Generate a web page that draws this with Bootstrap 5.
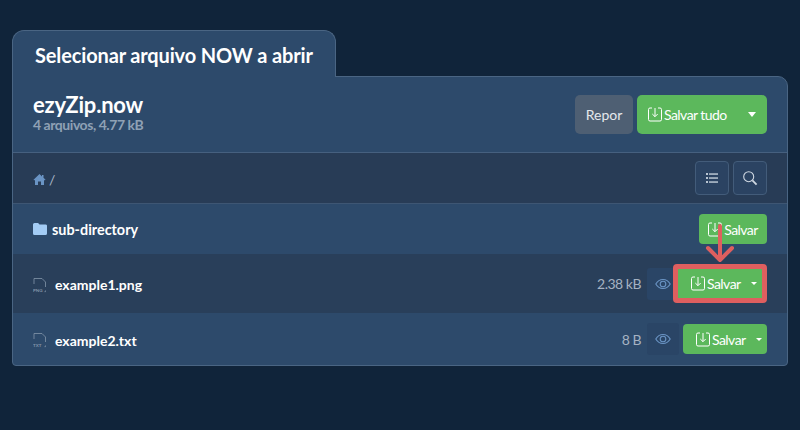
<!DOCTYPE html>
<html lang="pt">
<head>
<meta charset="utf-8">
<title>ezyZip</title>
<link href="https://cdn.jsdelivr.net/npm/bootstrap@5.3.0/dist/css/bootstrap.min.css" rel="stylesheet">
<style>
html,body{height:100%}
body{background:#10243a;font-family:Lato,sans-serif;color:#fff;padding:30px 12px 0;overflow:hidden}
.ez-tab{width:324px;height:47px;background:#2d4a6b;border:1px solid #4a6583;border-bottom:0;border-radius:12px 12px 0 0;font-size:20px;font-weight:700;padding-left:22px;position:relative;z-index:1;margin-bottom:-1px;line-height:49px;letter-spacing:-.14px}
.ez-panel{background:#2d4a6b;border:1px solid #4a6583;border-radius:0 10px 4px 4px;height:290px;overflow:visible;position:relative}
.ez-head{height:76px;padding:0 20px;border-bottom:1px solid #46607f}
.ez-brand{padding-bottom:3px}
.ez-title{font-size:22px;font-weight:700;line-height:22px;letter-spacing:-.2px}
.ez-sub{font-size:14px;font-weight:700;line-height:14px;color:#8fa1b5;letter-spacing:-.45px;margin-top:2px}
.ez-path{height:51px;padding:0 20px;background:#283c56;border-bottom:1px solid #3e5673;font-size:14px;color:#a9b6c6}
.ez-crumb{padding-top:3px;gap:3px}
.ez-row{padding:0 20px;font-weight:700}
.ez-r1{height:50px}.ez-r2{height:59px;background:#293f5a}.ez-r3{height:52px}
.ez-btn{background:#5cb85c;color:#fff;border:0;border-radius:4px;font-size:14px;font-weight:400;padding:0;display:inline-flex;align-items:center;justify-content:center;height:30px}
.ez-btn:hover{background:#5cb85c;color:#fff}
.ez-btn>span:not(.ez-caret){letter-spacing:-.55px}
.ez-btn svg{margin-right:2px;flex:none}
.ez-repor{width:58px;height:39px;background:#4e5f73;color:#e4e8ec;border:0;border-radius:5px;font-size:14px;padding:0}
.ez-all{width:130px;height:39px;margin-left:4px;justify-content:flex-start;padding-left:11px;border-radius:5px}
.ez-all .ez-caret{margin-left:auto;margin-right:11px;border-width:5px 4px 0}
.ez-dir{width:68px}
.ez-tool{width:34px;height:34px;background:#2b4362;border:1px solid #435c7a;border-radius:4px;padding:0;display:inline-flex;align-items:center;justify-content:center}
.ez-eye{width:32px;height:32px;background:#2a4566;border-radius:3px;display:inline-flex;align-items:center;justify-content:center}
.ez-size{color:#a5b2c2;font-size:14px;font-weight:400;margin-right:6px;letter-spacing:-.5px}
.ez-caret{width:0;height:0;border-left:4px solid transparent;border-right:4px solid transparent;border-top:4px solid #fff}
.ez-split{width:84px;justify-content:flex-start;padding-left:13px}
.ez-split .ez-caret{margin-left:10px;border-width:3.5px 3px 0}
.ez-name{margin-left:8px;padding-top:2px;font-size:14px}
.ez-dirname{margin-left:5px;padding-top:1px;font-size:14.4px}
.ez-file{margin-top:2px}
.ez-frame{border:5px solid #df5f5f;border-radius:4px;width:94px;height:39px;display:flex;align-items:center;justify-content:center;margin-left:-6px;position:relative;z-index:2}
.ez-frame .ez-btn{width:84px;height:29px;border-radius:0}
.ez-gap{margin-left:4px}
.ez-arrow{position:absolute;left:692px;top:147px;z-index:3}
</style>
</head>
<body>
<div class="ez-tab">Selecionar arquivo NOW a abrir</div>
<div class="ez-panel">
  <div class="ez-head d-flex align-items-center justify-content-between">
    <div class="ez-brand"><div class="ez-title">ezyZip.now</div><div class="ez-sub">4 arquivos, 4.77 kB</div></div>
    <div class="d-flex">
      <button class="btn ez-repor" type="button">Repor</button>
      <button class="btn ez-btn ez-all" type="button">
        <svg width="14" height="15" viewBox="0 0 14 15" fill="none" stroke="#fff"><path d="M4 1H2a1.500 1.500 0 0 0-1.500 1.500v10A1.500 1.500 0 0 0 2 14h10a1.500 1.500 0 0 0 1.500-1.500v-10A1.500 1.500 0 0 0 12 1h-2M7 1v8.500M4.300 7 7 9.700 9.700 7"/></svg>
        <span>Salvar tudo</span><span class="ez-caret"></span>
      </button>
    </div>
  </div>
  <div class="ez-path d-flex align-items-center justify-content-between">
    <div class="ez-crumb d-flex align-items-center">
      <svg width="13" height="13" viewBox="0 0 13 13" fill="#6a94c4"><path d="M6.500 1 0.500 6.700l.7.7L2 6.800V12h3V8.500h3V12h3V6.800l.8.6.7-.7L10.500 4.800V2H9v1.400z"/></svg><span>/</span>
    </div>
    <div class="d-flex gap-1">
      <button class="btn ez-tool" type="button" aria-label="Lista"><svg width="12" height="10" viewBox="0 0 12 10" fill="#b9c5d2"><rect x="0" y="0" width="2" height="2"/><rect x="0" y="4" width="2" height="2"/><rect x="0" y="8" width="2" height="2"/><rect x="3" y=".3" width="9" height="1.500"/><rect x="3" y="4.300" width="9" height="1.500"/><rect x="3" y="8.300" width="9" height="1.500"/></svg></button>
      <button class="btn ez-tool" type="button" aria-label="Buscar"><svg width="16" height="16" viewBox="0 0 16 16" fill="none" stroke="#cfd8e2" stroke-width="1.100"><circle cx="6.700" cy="6.700" r="5"/><path d="M10.400 10.400 14.600 14.600" stroke-width="1.800"/></svg></button>
    </div>
  </div>
  <div class="ez-row ez-r1 d-flex align-items-center justify-content-between">
    <div class="d-flex align-items-center">
      <svg width="14" height="12" viewBox="0 0 14 12" fill="#a3ccf5"><path d="M1.500 0h3.600l1.400 1.400h6A1.500 1.500 0 0 1 14 3v7.500a1.500 1.500 0 0 1-1.500 1.500h-11A1.500 1.500 0 0 1 0 10.500v-9A1.500 1.500 0 0 1 1.500 0z"/></svg>
      <span class="ez-dirname">sub-directory</span>
    </div>
    <button class="btn ez-btn ez-dir" type="button">
      <svg width="14" height="15" viewBox="0 0 14 15" fill="none" stroke="#fff"><path d="M4 1H2a1.500 1.500 0 0 0-1.500 1.500v10A1.500 1.500 0 0 0 2 14h10a1.500 1.500 0 0 0 1.500-1.500v-10A1.500 1.500 0 0 0 12 1h-2M7 1v8.500M4.300 7 7 9.700 9.700 7"/></svg><span>Salvar</span>
    </button>
  </div>
  <div class="ez-row ez-r2 d-flex align-items-center justify-content-between">
    <div class="d-flex align-items-center">
      <svg class="ez-file" width="14" height="16" viewBox="0 0 14 16" fill="none" stroke="#8395aa" stroke-width=".8"><path d="M1 7V1.500h8L12.500 5v5M12.500 13.500v1.200h-1"/><text x="0" y="14.500" font-size="4.500" fill="#8395aa" stroke="none" font-family="Lato">PNG</text></svg>
      <span class="ez-name">example1.png</span>
    </div>
    <div class="d-flex align-items-center">
      <span class="ez-size">2.38 kB</span>
      <span class="ez-eye"><svg width="16" height="12" viewBox="0 0 16 12" fill="none" stroke="#6a94c4" stroke-width="1.100"><path d="M.8 6C2.500 3 5 1.500 8 1.500S13.500 3 15.200 6C13.500 9 11 10.500 8 10.500S2.500 9 .8 6z"/><circle cx="8" cy="6" r="2.800"/></svg></span>
      <div class="ez-frame">
        <button class="btn ez-btn ez-split" type="button">
          <svg width="14" height="15" viewBox="0 0 14 15" fill="none" stroke="#fff"><path d="M4 1H2a1.500 1.500 0 0 0-1.500 1.500v10A1.500 1.500 0 0 0 2 14h10a1.500 1.500 0 0 0 1.500-1.500v-10A1.500 1.500 0 0 0 12 1h-2M7 1v8.500M4.300 7 7 9.700 9.700 7"/></svg><span>Salvar</span><span class="ez-caret"></span>
        </button>
      </div>
    </div>
  </div>
  <div class="ez-row ez-r3 d-flex align-items-center justify-content-between">
    <div class="d-flex align-items-center">
      <svg class="ez-file" width="14" height="16" viewBox="0 0 14 16" fill="none" stroke="#8395aa" stroke-width=".8"><path d="M1 7V1.500h8L12.500 5v5M12.500 13.500v1.200h-1"/><text x="0" y="14.500" font-size="4.500" fill="#8395aa" stroke="none" font-family="Lato">TXT</text></svg>
      <span class="ez-name">example2.txt</span>
    </div>
    <div class="d-flex align-items-center">
      <span class="ez-size">8 B</span>
      <span class="ez-eye"><svg width="16" height="12" viewBox="0 0 16 12" fill="none" stroke="#6a94c4" stroke-width="1.100"><path d="M.8 6C2.500 3 5 1.500 8 1.500S13.500 3 15.200 6C13.500 9 11 10.500 8 10.500S2.500 9 .8 6z"/><circle cx="8" cy="6" r="2.800"/></svg></span>
      <button class="btn ez-btn ez-split ez-gap" type="button">
        <svg width="14" height="15" viewBox="0 0 14 15" fill="none" stroke="#fff"><path d="M4 1H2a1.500 1.500 0 0 0-1.500 1.500v10A1.500 1.500 0 0 0 2 14h10a1.500 1.500 0 0 0 1.500-1.500v-10A1.500 1.500 0 0 0 12 1h-2M7 1v8.500M4.300 7 7 9.700 9.700 7"/></svg><span>Salvar</span><span class="ez-caret"></span>
      </button>
    </div>
  </div>
  <svg class="ez-arrow" width="30" height="40" viewBox="0 0 30 40" fill="none" stroke="#df5f5f" stroke-width="4" stroke-linecap="round" stroke-linejoin="round" aria-hidden="true"><path d="M15 2V36M3 24 15 36 27 24"/></svg>
</div>
<script src="https://cdn.jsdelivr.net/npm/bootstrap@5.3.0/dist/js/bootstrap.bundle.min.js"></script>
</body>
</html>
